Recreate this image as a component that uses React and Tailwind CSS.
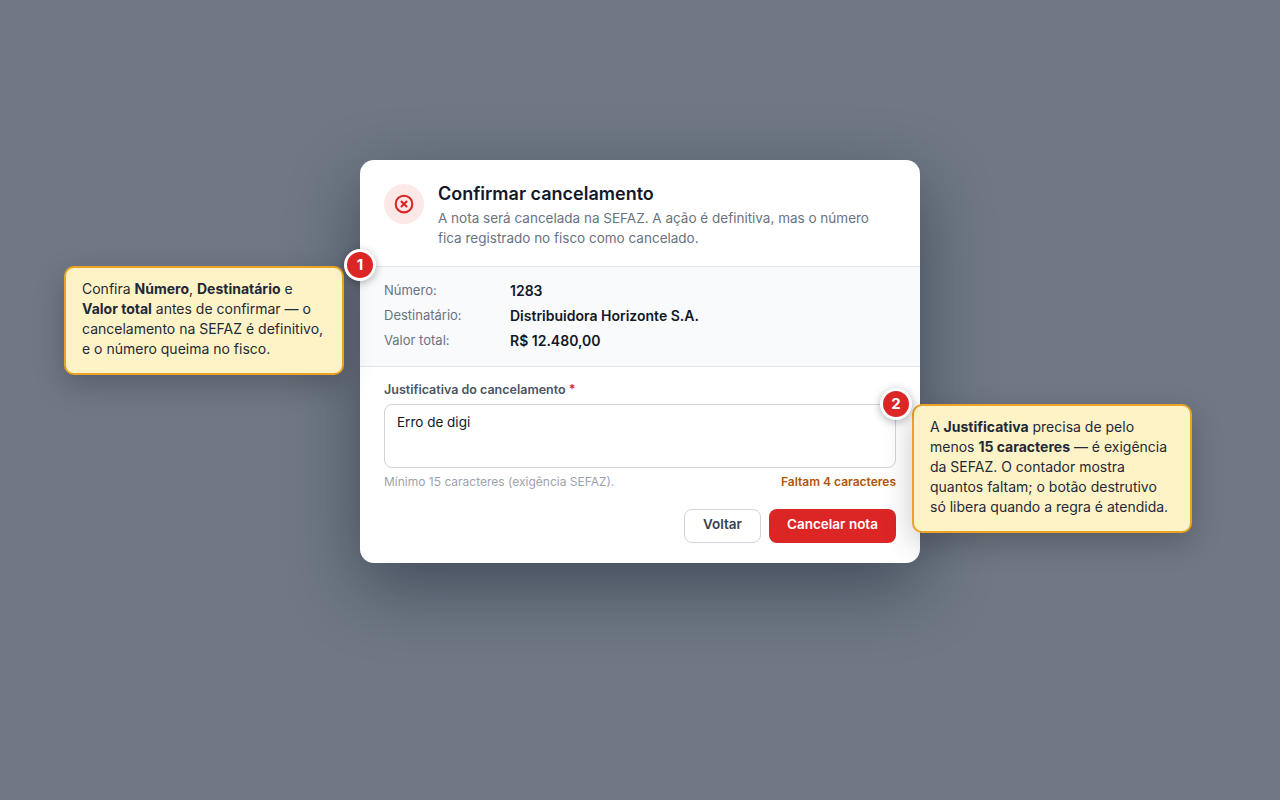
import { useState } from "react";

const Badge = ({ n, className }) => (
  <div
    className={`absolute flex h-[32px] w-[32px] items-center justify-center rounded-full border-[3px] border-white bg-[#dc2626] text-[15px] font-bold text-white shadow-[0_2px_8px_rgba(0,0,0,0.3)] ${className}`}
  >
    {n}
  </div>
);

const Callout = ({ className, children }) => (
  <div
    className={`absolute w-[280px] rounded-[10px] border-2 border-[#eba325] bg-[#fef3c7] px-4 pt-[11px] pb-[14px] text-[14px] leading-[20px] text-[#1f2937] shadow-[0_10px_30px_rgba(0,0,0,0.22)] ${className}`}
  >
    {children}
  </div>
);

const Row = ({ label, value }) => (
  <div className="flex h-[25px] items-center text-[13px]">
    <span className="w-[126px] text-[#6b7280]">{label}</span>
    <span className="text-[14px] font-semibold text-[#111827]">{value}</span>
  </div>
);

export default function App() {
  const [text, setText] = useState("Erro de digi");

  return (
    <div className="min-h-screen bg-[#6f7884] pt-[160px] font-['Inter',sans-serif]">
      <div className="relative mx-auto w-[560px]">
        {/* Modal */}
        <div className="overflow-hidden rounded-[14px] bg-white shadow-[0_24px_70px_rgba(15,23,42,0.45)]">
          <div className="flex gap-[14px] border-b border-[#e5e7eb] px-6 pt-6 pb-[18px]">
            <div className="flex h-10 w-10 shrink-0 items-center justify-center rounded-full bg-[#fde8e8]">
              <svg
                width="20"
                height="20"
                viewBox="0 0 24 24"
                fill="none"
                stroke="#dc2626"
                strokeWidth="2.5"
                strokeLinecap="round"
                strokeLinejoin="round"
              >
                <circle cx="12" cy="12" r="10" />
                <path d="m15 9-6 6" />
                <path d="m9 9 6 6" />
              </svg>
            </div>
            <div>
              <h2 className="text-[18px] leading-[20px] font-semibold text-[#111827]">
                Confirmar cancelamento
              </h2>
              <p className="mt-[4px] text-[13.5px] leading-[20px] text-[#6b7280]">
                A nota será cancelada na SEFAZ. A ação é definitiva, mas o número fica registrado no
                fisco como cancelado.
              </p>
            </div>
          </div>

          <div className="border-b border-[#e5e7eb] bg-[#f8fafc] px-6 pt-[11px] pb-[13px]">
            <Row label="Número:" value="1283" />
            <Row label="Destinatário:" value="Distribuidora Horizonte S.A." />
            <Row label="Valor total:" value="R$ 12.480,00" />
          </div>

          <div className="px-6 pt-[15px] pb-5">
            <label className="block text-[12.5px] leading-[16px] font-semibold text-[#4b5563]">
              Justificativa do cancelamento <span className="text-[#dc2626]">*</span>
            </label>
            <textarea
              value={text}
              onChange={(e) => setText(e.target.value)}
              className="mt-[6px] block h-[64px] w-full resize-none rounded-[8px] border border-[#d1d5db] px-3 py-[7px] text-[13.5px] leading-[20px] text-[#111827] outline-none"
            />
            <div className="mt-[6px] flex items-center justify-between text-[12px] leading-[16px]">
              <span className="text-[#9ca3af]">Mínimo 15 caracteres (exigência SEFAZ).</span>
              <span className="font-semibold text-[#b45309]">Faltam 4 caracteres</span>
            </div>
            <div className="mt-[19px] flex justify-end gap-2">
              <button className="h-[34px] w-[77px] rounded-[8px] border border-[#d1d5db] bg-white pb-[3px] text-[13.5px] font-semibold text-[#374151]">
                Voltar
              </button>
              <button className="h-[34px] w-[127px] rounded-[8px] bg-[#dc2626] pb-[3px] text-[13.5px] font-semibold text-white">
                Cancelar nota
              </button>
            </div>
          </div>
        </div>

        {/* Callouts */}
        <Callout className="top-[106px] left-[-296px]">
          Confira <b className="font-bold">Número</b>, <b className="font-bold">Destinatário</b> e{" "}
          <b className="font-bold">Valor total</b> antes de confirmar — o cancelamento na SEFAZ é
          definitivo, e o número queima no fisco.
        </Callout>
        <Badge n="1" className="top-[89px] left-[-16px]" />

        <Callout className="top-[244px] left-[552px]">
          A <b className="font-bold">Justificativa</b> precisa de pelo menos{" "}
          <b className="font-bold">15 caracteres</b> — é exigência da SEFAZ. O contador mostra
          quantos faltam; o botão destrutivo só libera quando a regra é atendida.
        </Callout>
        <Badge n="2" className="top-[228px] left-[520px]" />
      </div>
    </div>
  );
}
